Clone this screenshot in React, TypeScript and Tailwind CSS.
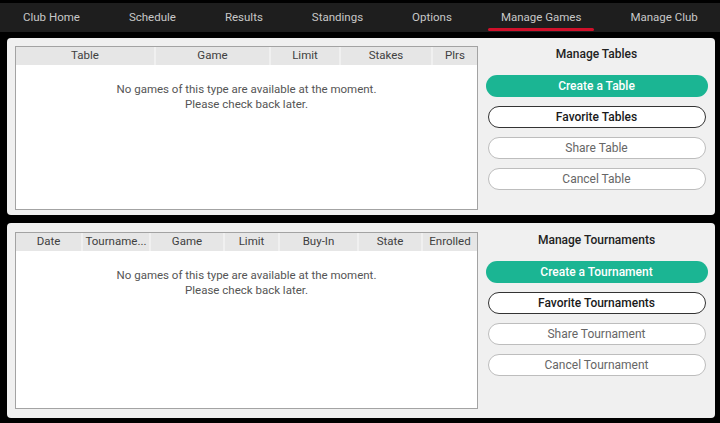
const TABS = ['Club Home', 'Schedule', 'Results', 'Standings', 'Options', 'Manage Games', 'Manage Club']

const TABLE_COLS = [
  { label: 'Table', w: 'w-[138px]' },
  { label: 'Game', w: 'w-[115px]' },
  { label: 'Limit', w: 'w-[70px]' },
  { label: 'Stakes', w: 'w-[92px]' },
  { label: 'Plrs', w: 'flex-1' },
]

const TOURNEY_COLS = [
  { label: 'Date', w: 'w-[65px]' },
  { label: 'Tourname...', w: 'w-[68px]' },
  { label: 'Game', w: 'w-[74px]' },
  { label: 'Limit', w: 'w-[55px]' },
  { label: 'Buy-In', w: 'w-[79px]' },
  { label: 'State', w: 'w-[64px]' },
  { label: 'Enrolled', w: 'flex-1' },
]

type Col = { label: string; w: string }

export default function App() {
  return (
    <div className="h-[423px] w-[720px] overflow-hidden bg-black pt-[3px] font-['Roboto',sans-serif]">
      <nav className="flex h-[29px] items-stretch bg-[#1e1e1e]">
        {TABS.map((tab) => (
          <div key={tab} className="relative flex shrink-0 items-center whitespace-nowrap px-[24.5px] text-[11.5px] text-[#c8c8c8] first:pl-[23px]">
            {tab}
            {tab === 'Manage Games' ? (
              <span className="absolute bottom-[1px] left-[12px] right-[12px] h-[3px] rounded-full bg-[#d0102a]" />
            ) : null}
          </div>
        ))}
      </nav>

      <div className="ml-[7px] mr-[5px] mt-[6px] flex flex-col gap-[8px]">
        <Panel
          height="h-[177px]"
          pad="pt-[8px] pb-[5px]"
          cols={TABLE_COLS}
          title="Manage Tables"
          buttons={['Create a Table', 'Favorite Tables', 'Share Table', 'Cancel Table']}
        />
        <Panel
          height="h-[195px]"
          pad="pt-[9px] pb-[9px]"
          cols={TOURNEY_COLS}
          title="Manage Tournaments"
          buttons={['Create a Tournament', 'Favorite Tournaments', 'Share Tournament', 'Cancel Tournament']}
        />
      </div>
    </div>
  )
}

function Panel({ height, pad, cols, title, buttons }: { height: string; pad: string; cols: Col[]; title: string; buttons: string[] }) {
  return (
    <section className={`flex ${height} rounded-[4px] bg-[#f0f0f0] pl-[8px] ${pad}`}>
      <div className="flex w-[463px] flex-col border border-[#a3a3a3] bg-white">
        <div className="flex h-[18px] bg-[#e6e6e6] text-[11.5px] text-[#404040]">
          {cols.map((c, i) => (
            <div key={c.label} className={`${c.w} flex items-center justify-center ${i ? 'border-l-2 border-[#f0f0f0]' : ''}`}>
              {c.label}
            </div>
          ))}
        </div>
        <div className="pt-[17px] text-center text-[11.5px] leading-[15px] text-[#555]">
          <div>No games of this type are available at the moment.</div>
          <div>Please check back later.</div>
        </div>
      </div>
      <div className="flex flex-1 flex-col items-center pt-[1px]">
        <h2 className="text-[12px] font-medium leading-[15px] text-[#222]">{title}</h2>
        <div className="mt-[13px] flex flex-col items-center gap-[9px]">
          {buttons.map((b, i) => (
            <button
              key={b}
              type="button"
              className={
                i === 0
                  ? 'h-[22px] w-[222px] rounded-full bg-[#1bb593] text-[12px] font-medium text-white'
                  : i === 1
                    ? 'h-[22px] w-[218px] rounded-full border border-[#333] bg-white text-[12px] font-medium text-[#1a1a1a]'
                    : 'h-[22px] w-[218px] rounded-full border border-[#bdbdbd] bg-white text-[12px] text-[#666]'
              }
            >
              {b}
            </button>
          ))}
        </div>
      </div>
    </section>
  )
}
